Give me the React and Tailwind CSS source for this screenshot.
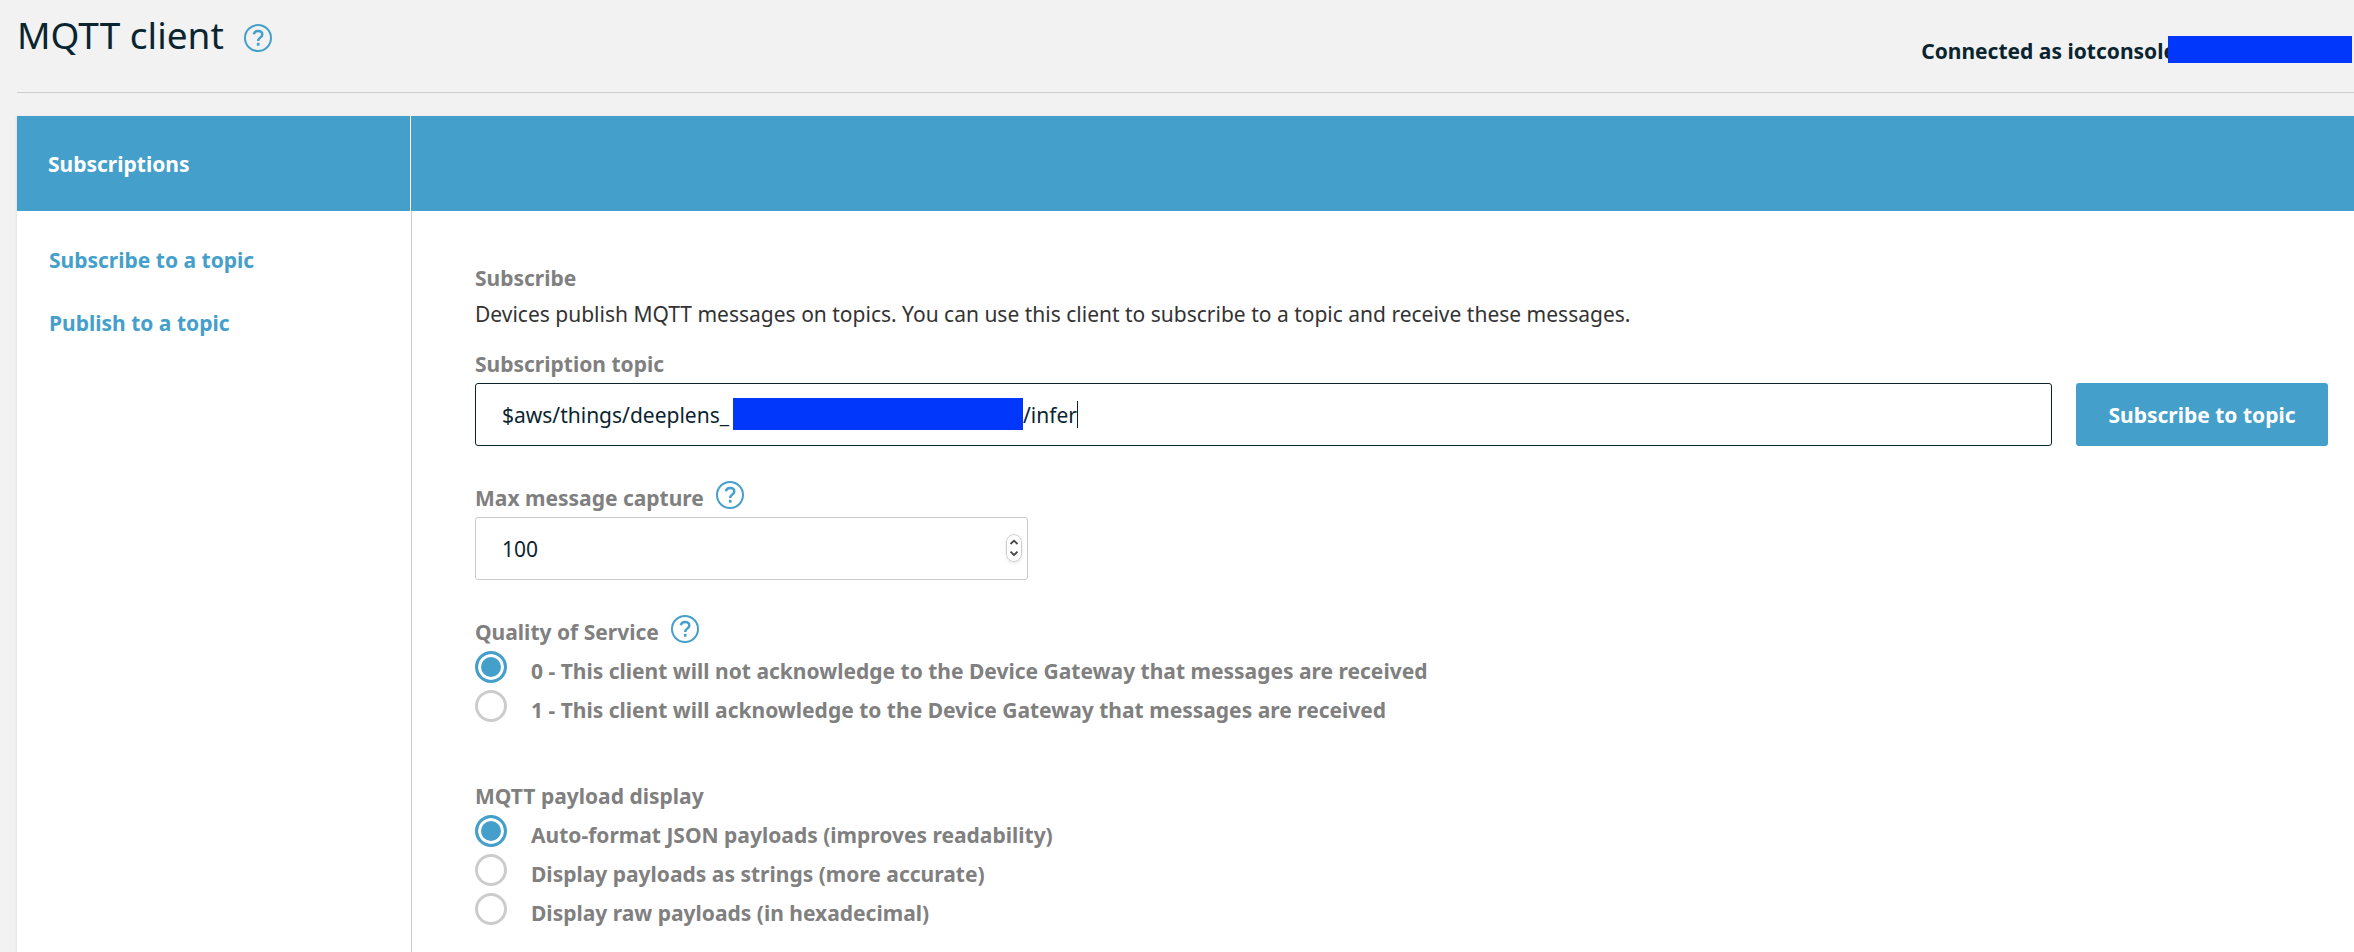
import React from "react";

function HelpButton({ label }) {
  return (
    <button type="button" aria-label={label} className="mt-px shrink-0 text-[#44a0cb]">
      <svg width="28" height="28" viewBox="0 0 28 28" fill="none" stroke="currentColor" aria-hidden="true" className="block">
        <circle cx="14" cy="14" r="13" strokeWidth="2" />
        <path d="M9.800 10.200C10.300 8 11.800 6.900 14 6.900c2.500 0 4.300 1.300 4.300 3.500C18.300 13.500 14.200 13.300 14.200 17" strokeWidth="2.500" />
        <path d="M14.200 18.800v2.900" strokeWidth="2.700" />
      </svg>
    </button>
  );
}

function RadioOption({ name, children, defaultChecked }) {
  return (
    <label className="flex h-[39px] items-start gap-6 leading-[41px] font-bold text-[#808080]">
      <input
        type="radio"
        name={name}
        defaultChecked={defaultChecked}
        className="size-8 shrink-0 appearance-none rounded-full border-3 border-[#ccc] bg-white checked:border-[#44a0cb] checked:bg-[#44a0cb] checked:shadow-[inset_0_0_0_3px_white]"
      />
      {children}
    </label>
  );
}

export default function App() {
  return (
    <div className="min-h-screen overflow-hidden bg-[#f2f2f2] pl-[17px] font-['Noto_Sans',sans-serif] text-[21px] leading-9 text-[#0a2530]">
      <header className="flex h-[93px] items-start justify-between border-b border-[#ccc]">
        <div className="flex items-center gap-5 pt-[7px]">
          <h1 className="pb-1 text-[37px] leading-[56px]">MQTT client</h1>
          <HelpButton label="Help: MQTT client" />
        </div>
        <p className="flex items-center pt-[33px] font-bold">
          Connected as iotconsole
          <span className="mr-0.5 mb-1 -ml-2 h-[27px] w-[184px] bg-[#0037fa]" />
        </p>
      </header>

      <div className="mt-[23px] flex min-h-[836px] flex-col bg-white shadow-sm">
        <div className="flex h-[95px] items-stretch bg-[#44a0cb] font-bold text-white">
          <h2 className="flex w-[394px] shrink-0 items-center border-r border-white pl-[31px]">Subscriptions</h2>
        </div>
        <div className="flex grow">
          <nav className="flex w-[395px] shrink-0 flex-col gap-[27px] border-r border-[#ccc] pt-[31px] pl-8 font-bold text-[#44a0cb]">
            <a href="#subscribe">Subscribe to a topic</a>
            <a href="#publish">Publish to a topic</a>
          </nav>

          <form className="grow pt-[49px] pr-[26px] pl-[63px]">
            <h3 className="font-bold text-[#808080]">Subscribe</h3>
            <p className="text-[#333]">
              Devices publish MQTT messages on topics. You can use this client to subscribe to a topic and receive these messages.
            </p>
            <label htmlFor="topic" className="mt-[14px] mb-px block font-bold text-[#808080]">Subscription topic</label>
            <div className="flex gap-6">
              <div className="relative grow">
                <input
                  id="topic"
                  type="text"
                  defaultValue="$aws/things/deeplens_"
                  className="h-[63px] w-full rounded-[3px] border border-[#0a2530] bg-white pl-[26px] outline-none"
                />
                <div className="pointer-events-none absolute inset-y-0 left-[258px] flex items-center">
                  <span className="mb-0.5 h-8 w-[290px] bg-[#0037fa]" />
                  <span>/infer</span>
                  <span className="h-[27px] w-px bg-[#0a2530]" />
                </div>
              </div>
              <button type="button" className="h-[63px] w-[252px] rounded-[3px] bg-[#44a0cb] font-bold text-white">Subscribe to topic</button>
            </div>

            <div className="mt-[34px] mb-px flex items-start gap-3">
              <label htmlFor="capture" className="font-bold text-[#808080]">Max message capture</label>
              <HelpButton label="Help: Max message capture" />
            </div>
            <div className="relative w-[553px]">
              <input
                id="capture"
                type="number"
                defaultValue="100"
                className="h-[63px] w-full appearance-none rounded-[3px] border border-[#ccc] bg-white pl-[26px] outline-none [-moz-appearance:textfield] [&::-webkit-inner-spin-button]:appearance-none"
              />
              <svg width="16" height="28" viewBox="0 0 16 28" fill="none" aria-hidden="true" className="absolute top-[17px] right-[6px] rounded-full shadow-sm">
                <rect x="0.5" y="0.5" width="15" height="27" rx="7.500" fill="white" stroke="#ccc" />
                <path d="M4.500 10 8 6.700l3.500 3.300M4.500 17.700 8 21l3.500-3.300" stroke="#444" strokeWidth="1.800" />
              </svg>
            </div>

            <fieldset className="mt-[34px]">
              <legend className="mb-px flex items-start gap-3 font-bold text-[#808080]">
                Quality of Service
                <HelpButton label="Help: Quality of Service" />
              </legend>
              <RadioOption name="qos" defaultChecked>0 - This client will not acknowledge to the Device Gateway that messages are received</RadioOption>
              <RadioOption name="qos">1 - This client will acknowledge to the Device Gateway that messages are received</RadioOption>
            </fieldset>

            <fieldset className="mt-[49px]">
              <legend className="mb-px font-bold text-[#808080]">MQTT payload display</legend>
              <RadioOption name="display" defaultChecked>Auto-format JSON payloads (improves readability)</RadioOption>
              <RadioOption name="display">Display payloads as strings (more accurate)</RadioOption>
              <RadioOption name="display">Display raw payloads (in hexadecimal)</RadioOption>
            </fieldset>
          </form>
        </div>
      </div>
    </div>
  );
}
